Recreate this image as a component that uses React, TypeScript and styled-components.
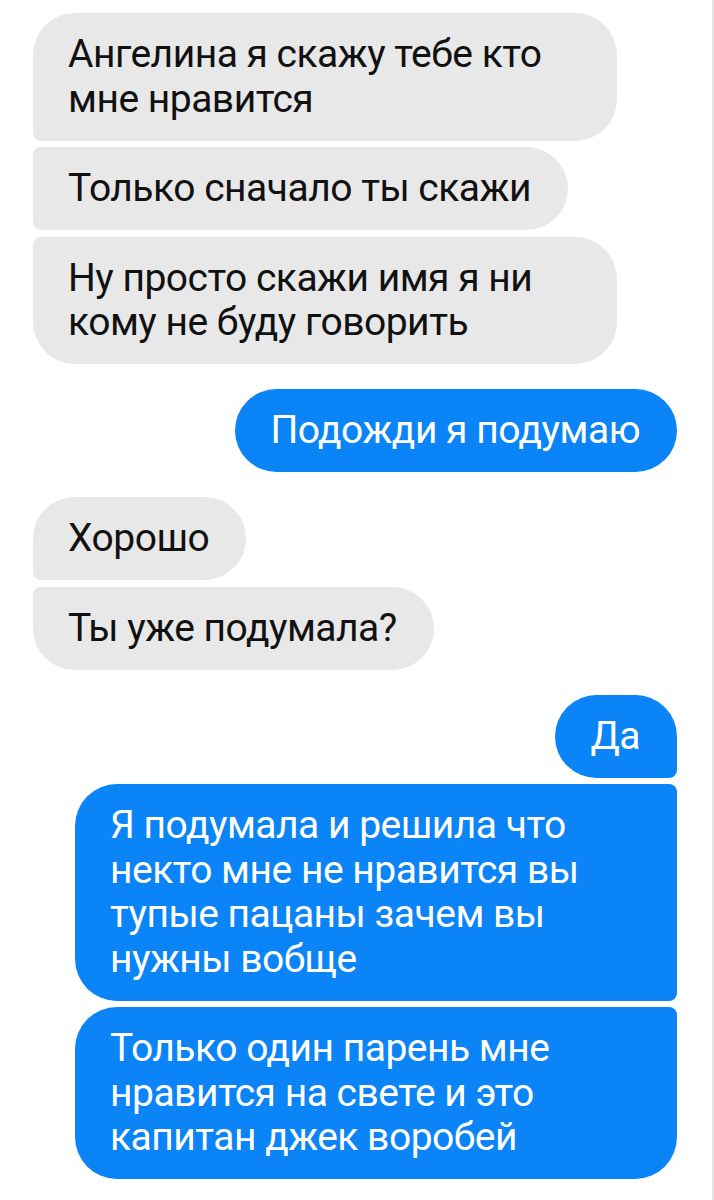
import styled, { createGlobalStyle, css } from 'styled-components';

const GlobalStyle = createGlobalStyle`
  html, body {
    margin: 0;
    padding: 0;
    background: #ffffff;
  }
  body {
    font-family: Roboto, 'Noto Sans', 'Liberation Sans', sans-serif;
  }
`;

type Side = 'in' | 'out';
type Pos = 'single' | 'first' | 'middle' | 'last';

const Page = styled.div`
  width: 714px;
  min-height: 1200px;
  box-sizing: border-box;
  padding: 13px 35px 0 33px;
  border-right: 2px solid #e4e4e4;
  display: flex;
  flex-direction: column;
`;

const Group = styled.div<{ $side: Side }>`
  display: flex;
  flex-direction: column;
  align-items: ${(p) => (p.$side === 'in' ? 'flex-start' : 'flex-end')};
  gap: 6.5px;
  margin-bottom: 25px;
`;

const BIG = 42;
const SMALL = 8;

const radius = (side: Side, pos: Pos) => {
  const top = pos === 'single' || pos === 'first' ? BIG : SMALL;
  const bottom = pos === 'single' || pos === 'last' ? BIG : SMALL;
  if (side === 'in') {
    return css`
      border-radius: ${top}px ${BIG}px ${BIG}px ${bottom}px;
    `;
  }
  return css`
    border-radius: ${BIG}px ${top}px ${bottom}px ${BIG}px;
  `;
};

const Bubble = styled.div<{ $side: Side; $pos: Pos; $width?: number }>`
  box-sizing: border-box;
  padding: 19.25px 37px 19.25px 35px;
  font-size: 39px;
  line-height: 44.5px;
  letter-spacing: -0.5px;
  white-space: nowrap;
  width: ${(p) => (p.$width ? `${p.$width}px` : 'auto')};
  background: ${(p) => (p.$side === 'in' ? '#e8e8e8' : '#0a84f7')};
  color: ${(p) => (p.$side === 'in' ? '#111111' : '#ffffff')};
  ${(p) => radius(p.$side, p.$pos)}
`;

const Line = styled.div``;

type Msg = { lines: string[]; width?: number };
type Chunk = { side: Side; msgs: Msg[] };

const chat: Chunk[] = [
  {
    side: 'in',
    msgs: [
      { lines: ['Ангелина я скажу тебе кто', 'мне нравится'], width: 584 },
      { lines: ['Только сначало ты скажи'] },
      { lines: ['Ну просто скажи имя я ни', 'кому не буду говорить'], width: 584 },
    ],
  },
  { side: 'out', msgs: [{ lines: ['Подожди я подумаю'] }] },
  {
    side: 'in',
    msgs: [{ lines: ['Хорошо'] }, { lines: ['Ты уже подумала?'] }],
  },
  {
    side: 'out',
    msgs: [
      { lines: ['Да'] },
      {
        lines: [
          'Я подумала и решила что',
          'некто мне не нравится вы',
          'тупые пацаны зачем вы',
          'нужны вобще',
        ],
        width: 602,
      },
      {
        lines: ['Только один парень мне', 'нравится на свете и это', 'капитан джек воробей'],
        width: 602,
      },
    ],
  },
];

const posOf = (i: number, n: number): Pos => {
  if (n === 1) return 'single';
  if (i === 0) return 'first';
  if (i === n - 1) return 'last';
  return 'middle';
};

export default function App() {
  return (
    <>
      <GlobalStyle />
      <Page>
        {chat.map((chunk, ci) => (
          <Group key={ci} $side={chunk.side}>
            {chunk.msgs.map((m, mi) => (
              <Bubble
                key={mi}
                $side={chunk.side}
                $pos={posOf(mi, chunk.msgs.length)}
                $width={m.width}
              >
                {m.lines.map((l, li) => (
                  <Line key={li}>{l}</Line>
                ))}
              </Bubble>
            ))}
          </Group>
        ))}
      </Page>
    </>
  );
}
